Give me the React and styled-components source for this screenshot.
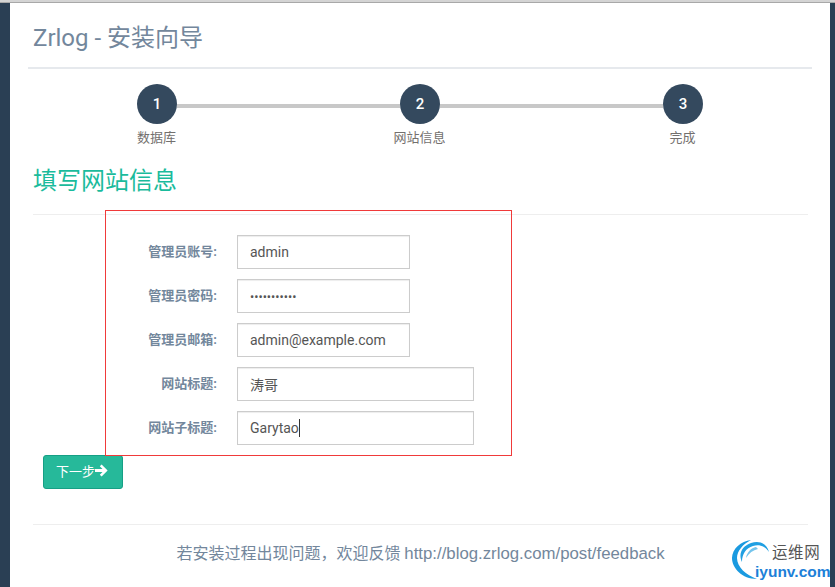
import React from "react";
import styled, { createGlobalStyle } from "styled-components";

const FONT = `Roboto, "Noto Sans CJK SC", sans-serif`;

const Global = createGlobalStyle`
  html, body { margin: 0; padding: 0; height: 100%; overflow: hidden; }
  body { font-family: ${FONT}; background: #2a3f54; }
  * { box-sizing: border-box; }
`;

const Page = styled.div`
  position: relative;
  width: 835px;
  height: 587px;
  padding: 3px 5px 0 10px;
  background: #2a3f54;
  overflow: hidden;
  &::before {
    content: "";
    position: absolute;
    top: 0; left: 0; right: 0;
    height: 3px;
    background: linear-gradient(#d4d4d4, #d4d4d4 66%, #a8a8a8 66%);
  }
`;

const Panel = styled.main`
  background: #fff;
  height: 584px;
`;

const Header = styled.header`
  margin: 0 18px;
  height: 66px;
  padding: 17px 0 0 5px;
  border-bottom: 2px solid #e6e9ed;
`;

const Title = styled.h1`
  margin: 0;
  font-size: 24px;
  line-height: 36px;
  font-weight: 400;
  color: #73879c;
`;

const Track = styled.div`
  display: flex;
  align-items: center;
  margin: 15px 0 0 127px;
  width: 566px;
`;

const Circle = styled.div`
  flex: none;
  width: 40px;
  height: 40px;
  border-radius: 50%;
  background: #34495e;
  color: #fff;
  font-size: 15px;
  font-weight: 500;
  display: flex;
  align-items: center;
  justify-content: center;
`;

const Connector = styled.div`
  flex: 1;
  height: 4px;
  margin-top: 4px;
  background: #c8c8c8;
`;

const Labels = styled.div`
  display: grid;
  grid-template-columns: repeat(3, 263px);
  margin: 4px 0 0 15px;
`;

const StepLabel = styled.div`
  text-align: center;
  font-size: 13px;
  line-height: 20px;
  color: #73706e;
`;

const Content = styled.section`
  padding: 14px 22px 0 23px;
`;

const Heading = styled.h2`
  margin: 0;
  height: 53px;
  padding-top: 2px;
  font-size: 24px;
  line-height: 34px;
  font-weight: 400;
  color: #1abb9c;
  border-bottom: 1px solid #eeeeee;
`;

const FormArea = styled.form`
  position: relative;
  display: flex;
  flex-direction: column;
  gap: 10px;
  padding-top: 20px;
`;

const Annotation = styled.div`
  position: absolute;
  z-index: 2;
  left: 72px;
  top: -5px;
  width: 407px;
  height: 246px;
  border: 1px solid rgb(240, 58, 58);
  pointer-events: none;
`;

const Row = styled.div`
  display: flex;
  align-items: center;
  gap: 20px;
`;

const FieldLabel = styled.label`
  width: 184px;
  padding-bottom: 3px;
  text-align: right;
  font-size: 13px;
  font-weight: 700;
  color: #73879c;
`;

const FieldWrap = styled.div`
  position: relative;
  display: flex;
`;

const Input = styled.input`
  width: ${(p) => (p.$wide ? "237px" : "173px")};
  height: 34px;
  padding: 0 12px;
  border: 1px solid #ccc;
  border-radius: 0;
  outline: none;
  background: #fff;
  box-shadow: inset 0 1px 1px rgba(0, 0, 0, 0.075);
  font-family: ${FONT};
  font-size: 14px;
  color: #555;
  &[type="password"] { font-size: 12.5px; }
`;

const Caret = styled.span`
  position: absolute;
  left: 62px;
  top: 8px;
  width: 1px;
  height: 18px;
  background: #333;
`;

const NextButton = styled.button`
  display: flex;
  align-items: center;
  justify-content: flex-start;
  width: 80px;
  height: 34px;
  margin: 10px 0 0 10px;
  padding: 0 0 4px 12px;
  background: #26b99a;
  border: 1px solid #169f85;
  border-radius: 3px;
  color: #fff;
  font-family: ${FONT};
  font-size: 13px;
`;

const Footer = styled.footer`
  margin-top: 35px;
  height: 59px;
  border-top: 1px solid #eeeeee;
  text-align: center;
  font-size: 16px;
  line-height: 57px;
  color: #73879c;
`;

const FooterLink = styled.span`
  font-family: "Liberation Sans", sans-serif;
  font-size: 16.8px;
`;

const Watermark = styled.div`
  position: absolute;
  left: 730px;
  top: 538px;
  width: 100px;
  height: 46px;
  overflow: hidden;
`;

const WmCn = styled.div`
  position: absolute;
  left: 42px;
  top: 5px;
  font-size: 15.5px;
  line-height: 20px;
  color: #555;
  letter-spacing: 0.6px;
`;

const WmEn = styled.div`
  position: absolute;
  left: 25px;
  top: 24px;
  font-family: "Liberation Sans", sans-serif;
  font-size: 15.5px;
  line-height: 20px;
  font-weight: 700;
  color: #1c80d8;
`;

function Arrow() {
  return (
    <svg width="13" height="13" viewBox="0 0 13 13">
      <path d="M0 5 H7.5 L4.8 2.2 L6.6 0.4 L12.6 6.5 L6.6 12.6 L4.8 10.8 L7.5 8 H0 Z" fill="#fff" />
    </svg>
  );
}

function Arcs() {
  return (
    <svg width="46" height="46" viewBox="0 0 46 46" style={{ position: "absolute", left: 0, top: 0 }}>
      <path d="M27 41 C12 41 2 30 2 20 C2 11 11 3 21 2 C13 6 7 13 7 20 C7 29 16 37 27 41 Z" fill="#1a9ae0" />
      <path d="M21 5 C30 2 37 6 39 14 C35 8 29 6 23 8 C16 10 12 16 12 24 C8 16 12 8 21 5 Z" fill="#1f9fe2" />
      <path d="M26 9 C21 10 17 14 16 20 C19 15 23 12 28 11 Z" fill="#74c4ec" />
    </svg>
  );
}

const fields = [
  { label: "管理员账号:", value: "admin", type: "text" },
  { label: "管理员密码:", value: "admin123456", type: "password" },
  { label: "管理员邮箱:", value: "admin@example.com", type: "text" },
  { label: "网站标题:", value: "涛哥", type: "text", wide: true },
  { label: "网站子标题:", value: "Garytao", type: "text", wide: true, caret: true },
];

export default function App() {
  return (
    <Page>
      <Global />
      <Panel>
        <Header>
          <Title>Zrlog - 安装向导</Title>
        </Header>
        <Track>
          <Circle>1</Circle>
          <Connector />
          <Circle>2</Circle>
          <Connector />
          <Circle>3</Circle>
        </Track>
        <Labels>
          <StepLabel>数据库</StepLabel>
          <StepLabel>网站信息</StepLabel>
          <StepLabel>完成</StepLabel>
        </Labels>
        <Content>
          <Heading>填写网站信息</Heading>
          <FormArea onSubmit={(e) => e.preventDefault()}>
            <Annotation />
            {fields.map((f) => (
              <Row key={f.label}>
                <FieldLabel>{f.label}</FieldLabel>
                <FieldWrap>
                  <Input type={f.type} defaultValue={f.value} $wide={f.wide} readOnly />
                  {f.caret && <Caret />}
                </FieldWrap>
              </Row>
            ))}
          </FormArea>
          <NextButton type="button">
            下一步
            <Arrow />
          </NextButton>
          <Footer>
            若安装过程出现问题，欢迎反馈 <FooterLink>http://blog.zrlog.com/post/feedback</FooterLink>
          </Footer>
        </Content>
      </Panel>
      <Watermark>
        <Arcs />
        <WmCn>运维网</WmCn>
        <WmEn>iyunv.com</WmEn>
      </Watermark>
    </Page>
  );
}
